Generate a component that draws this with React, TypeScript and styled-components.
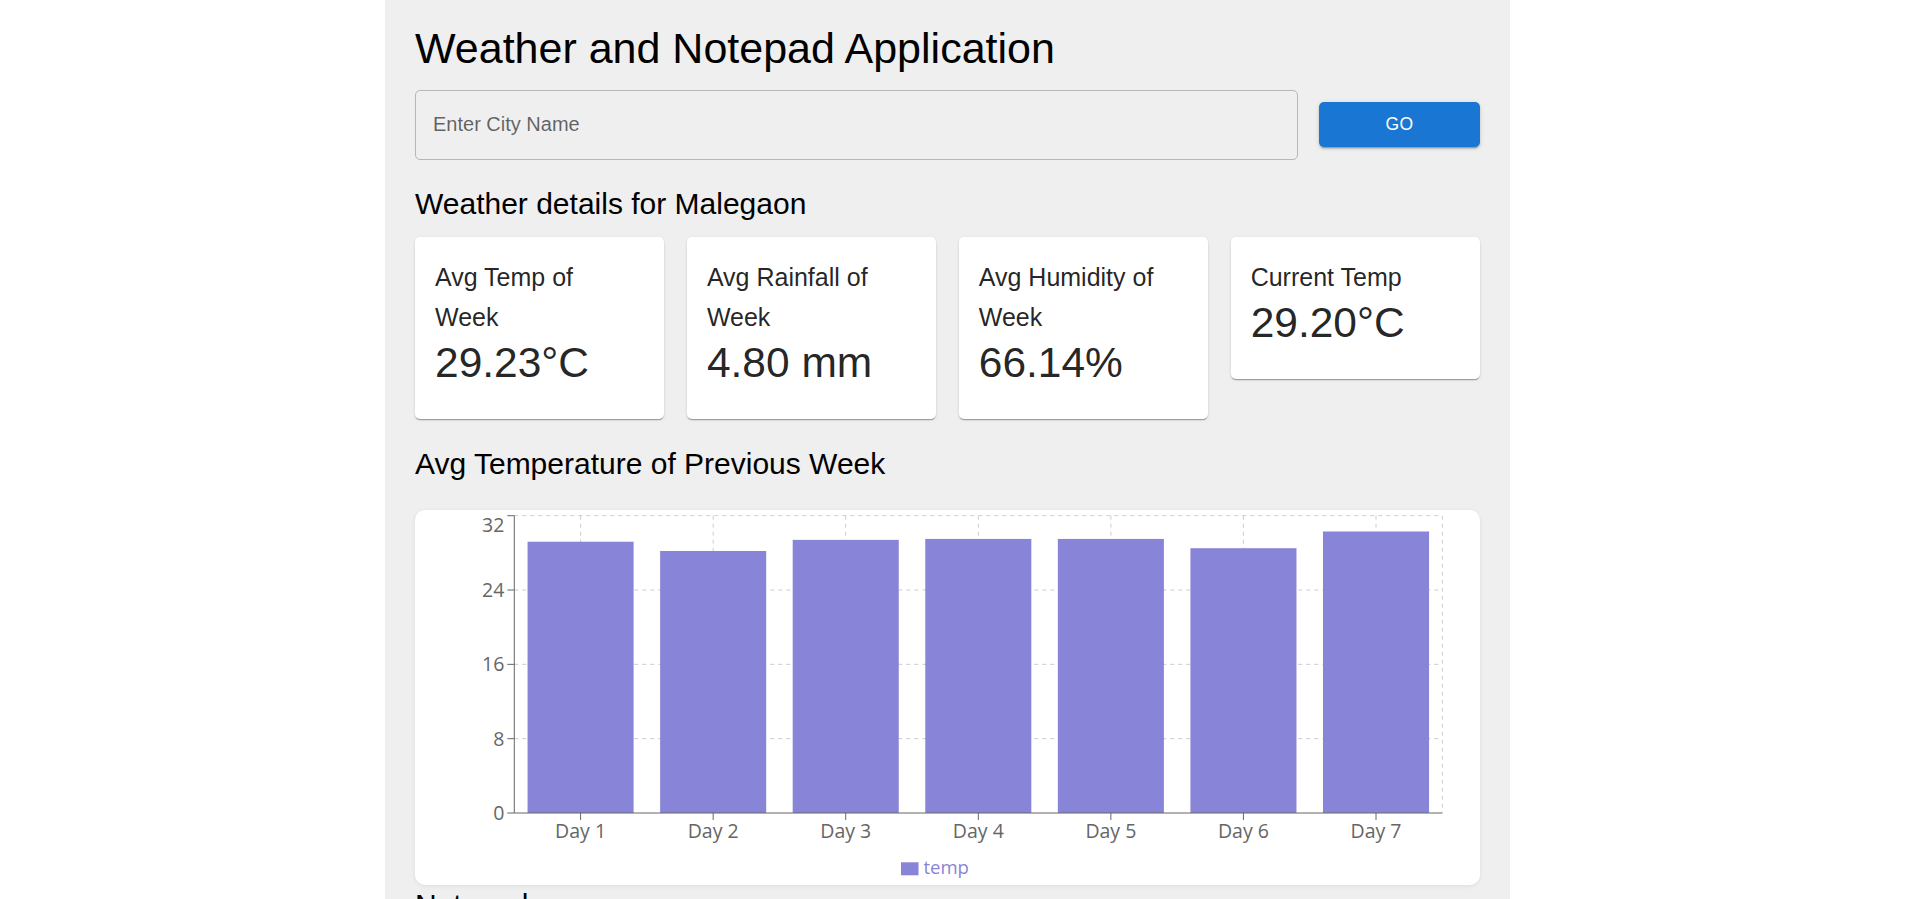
import React from "react";
import styled, { createGlobalStyle } from "styled-components";

const GlobalStyle = createGlobalStyle`
  html, body {
    margin: 0;
    padding: 0;
    background: #ffffff;
  }
  html {
    overflow-y: scroll;
  }
  ::-webkit-scrollbar {
    width: 17px;
    background: #f1f1f1;
  }
  ::-webkit-scrollbar-thumb {
    background: #c1c1c1;
    border-left: 2px solid #f1f1f1;
    border-right: 2px solid #f1f1f1;
    border-top: 17px solid #f1f1f1;
    background-clip: padding-box;
  }
  body {
    font-family: "Liberation Sans", Arial, Helvetica, sans-serif;
    color: rgba(0, 0, 0, 0.87);
  }
  * { box-sizing: border-box; }
`;

const Viewport = styled.div`
  width: calc(100vw - 17px);
`;

const Page = styled.div`
  width: 1125px;
  margin-left: calc(50% - 565px);
  background: #efefef;
  padding: 22px 30px 58px;
`;

const Title = styled.h1`
  margin: 0 0 15px;
  font-size: 43px;
  line-height: 52.5px;
  font-weight: 400;
  color: #000;
`;

const SearchRow = styled.div`
  display: flex;
  align-items: center;
  gap: 21px;
`;

const CityInput = styled.input`
  flex: 1;
  height: 70px;
  border: 1px solid rgba(0, 0, 0, 0.23);
  border-radius: 5px;
  background: transparent;
  padding: 0 17px;
  font-family: "Liberation Sans", Arial, sans-serif;
  font-size: 20px;
  color: rgba(0, 0, 0, 0.87);
  outline: none;
  &::placeholder {
    color: rgba(0, 0, 0, 0.6);
  }
`;

const ActionButton = styled.button`
  width: 161px;
  height: 45px;
  border: none;
  border-radius: 5px;
  background: #1976d2;
  color: #fff;
  font-family: "Liberation Sans", Arial, sans-serif;
  font-size: 17.5px;
  font-weight: 500;
  letter-spacing: 0.5px;
  text-transform: uppercase;
  cursor: pointer;
  box-shadow: 0px 3px 1px -2px rgba(0, 0, 0, 0.2),
    0px 2px 2px 0px rgba(0, 0, 0, 0.14), 0px 1px 5px 0px rgba(0, 0, 0, 0.12);
`;

const SectionTitle = styled.h2<{ $mt: number; $mb: number }>`
  margin: ${(p) => p.$mt}px 0 ${(p) => p.$mb}px;
  font-size: 30px;
  line-height: 40px;
  font-weight: 400;
  color: #000;
`;

const CardGrid = styled.div`
  display: grid;
  grid-template-columns: repeat(4, 1fr);
  gap: 22.5px;
  align-items: start;
`;

const StatCard = styled.div`
  background: #fff;
  border-radius: 5px;
  padding: 20px 20px 30px;
  box-shadow: 0px 2px 1px -1px rgba(0, 0, 0, 0.2),
    0px 1px 1px 0px rgba(0, 0, 0, 0.14), 0px 1px 3px 0px rgba(0, 0, 0, 0.12);
`;

const StatLabel = styled.div`
  max-width: 200px;
  font-size: 25px;
  line-height: 40px;
  font-weight: 500;
  color: rgba(0, 0, 0, 0.87);
`;

const StatValue = styled.div`
  font-size: 42.5px;
  line-height: 52.5px;
  font-weight: 400;
  color: rgba(0, 0, 0, 0.87);
`;

const ChartCard = styled.div`
  height: 375px;
  background: #fff;
  border-radius: 10px;
  box-shadow: 0px 1px 4px rgba(0, 0, 0, 0.08);
  overflow: hidden;
`;

const ChartSvg = styled.svg`
  display: block;
  font-family: "Open Sans", "Noto Sans", sans-serif;
`;

const NoteArea = styled.textarea`
  display: block;
  width: 100%;
  height: 160px;
  margin-top: 10px;
  border: 1px solid rgba(0, 0, 0, 0.23);
  border-radius: 5px;
  background: transparent;
  padding: 17px;
  font-family: "Liberation Sans", Arial, sans-serif;
  font-size: 20px;
  resize: none;
  outline: none;
  &::placeholder {
    color: rgba(0, 0, 0, 0.6);
  }
`;

const SaveRow = styled.div`
  display: flex;
  margin-top: 20px;
`;

const stats = [
  { label: "Avg Temp of Week", value: "29.23°C" },
  { label: "Avg Rainfall of Week", value: "4.80 mm" },
  { label: "Avg Humidity of Week", value: "66.14%" },
  { label: "Current Temp", value: "29.20°C" },
];

const temps = [29.2, 28.2, 29.4, 29.5, 29.5, 28.5, 30.3];

const TempChart: React.FC = () => {
  const W = 1065;
  const H = 375;
  const L = 99.3;
  const R = 1027.3;
  const T = 5.7;
  const B = 303;
  const band = (R - L) / temps.length;
  const yOf = (v: number) => B - ((B - T) * v) / 32;
  const ticks = [0, 8, 16, 24, 32];
  const grid = "#cccccc";
  const axis = "#666666";
  return (
    <ChartSvg width={W} height={H} viewBox={`0 0 ${W} ${H}`}>
      {ticks
        .filter((t) => t > 0)
        .map((t) => (
          <line
            key={`h${t}`}
            x1={L}
            x2={R}
            y1={yOf(t)}
            y2={yOf(t)}
            stroke={grid}
            strokeDasharray="4 4"
          />
        ))}
      {temps.map((_, i) => (
        <line
          key={`v${i}`}
          x1={L + band * (i + 0.5)}
          x2={L + band * (i + 0.5)}
          y1={T}
          y2={B}
          stroke={grid}
          strokeDasharray="4 4"
        />
      ))}
      <line x1={R} x2={R} y1={T} y2={B} stroke={grid} strokeDasharray="4 4" />
      {temps.map((v, i) => (
        <rect
          key={`b${i}`}
          x={L + band * i + band * 0.1}
          y={yOf(v)}
          width={band * 0.8}
          height={B - yOf(v)}
          fill="#8884d8"
        />
      ))}
      <line x1={L} x2={L} y1={T} y2={B} stroke={axis} />
      <line x1={L} x2={R} y1={B} y2={B} stroke={axis} />
      {ticks.map((t) => (
        <g key={`yt${t}`}>
          <line x1={L - 7} x2={L} y1={yOf(t)} y2={yOf(t)} stroke={axis} />
          <text
            x={L - 10}
            y={t === 32 ? 21.5 : yOf(t) + 7}
            textAnchor="end"
            fontSize="19.5"
            fill={axis}
          >
            {t}
          </text>
        </g>
      ))}
      {temps.map((_, i) => {
        const cx = L + band * (i + 0.5);
        return (
          <g key={`xt${i}`}>
            <line x1={cx} x2={cx} y1={B} y2={B + 7} stroke={axis} />
            <text x={cx} y={328} textAnchor="middle" fontSize="19.5" fill={axis}>
              {`Day ${i + 1}`}
            </text>
          </g>
        );
      })}
      <rect x={486} y={352.3} width={17.5} height={13} fill="#8884d8" />
      <text x={508.5} y={364} fontSize="18.5" fill="#8884d8">
        temp
      </text>
    </ChartSvg>
  );
};

export default function App() {
  return (
    <>
      <GlobalStyle />
      <Viewport>
        <Page>
          <Title>Weather and Notepad Application</Title>
          <SearchRow>
            <CityInput placeholder="Enter City Name" />
            <ActionButton>Go</ActionButton>
          </SearchRow>
          <SectionTitle $mt={24} $mb={13}>
            Weather details for Malegaon
          </SectionTitle>
          <CardGrid>
            {stats.map((s) => (
              <StatCard key={s.label}>
                <StatLabel>{s.label}</StatLabel>
                <StatValue>{s.value}</StatValue>
              </StatCard>
            ))}
          </CardGrid>
          <SectionTitle $mt={24.5} $mb={26}>
            Avg Temperature of Previous Week
          </SectionTitle>
          <ChartCard>
            <TempChart />
          </ChartCard>
          <SectionTitle $mt={0} $mb={0}>
            Notepad
          </SectionTitle>
          <NoteArea placeholder="Write your notes here..." />
          <SaveRow>
            <ActionButton>Save</ActionButton>
          </SaveRow>
        </Page>
      </Viewport>
    </>
  );
}
